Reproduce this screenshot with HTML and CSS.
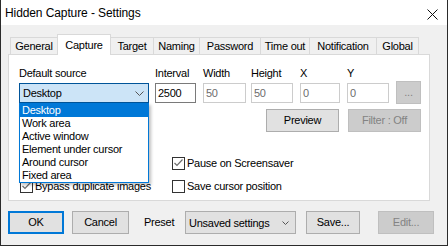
FILE: index.html
```html
<!DOCTYPE html>
<html lang="en">
<head>
  <meta charset="UTF-8" />
  <title>Hidden Capture - Settings</title>
  <link rel="stylesheet" href="styles.css">
</head>
<body>
  <div class="window">
    <div class="titlebar">
      <span class="title">Hidden Capture - Settings</span>
      <svg class="close" width="11" height="11" viewBox="0 0 11 11">
        <path d="M0.5 0.5 L10.5 10.5 M10.5 0.5 L0.5 10.5" stroke="#111" stroke-width="1" fill="none" />
      </svg>
    </div>

    <div class="client">
      <div class="tabs">
        <div class="tab t-general">General</div>
        <div class="tab t-capture active">Capture</div>
        <div class="tab t-target">Target</div>
        <div class="tab t-naming">Naming</div>
        <div class="tab t-password">Password</div>
        <div class="tab t-timeout">Time out</div>
        <div class="tab t-notif">Notification</div>
        <div class="tab t-global">Global</div>
      </div>

      <div class="panel">
        <div class="fields">
          <div class="field f-source">
            <label>Default source</label>
            <div class="combo">
              <span>Desktop</span>
              <svg class="chev" width="9" height="5" viewBox="0 0 9 5">
                <polyline points="0.5,0.5 4.5,4.5 8.5,0.5" stroke="#555" stroke-width="1" fill="none" />
              </svg>
              <ul class="droplist">
                <li class="selected">Desktop</li>
                <li>Work area</li>
                <li>Active window</li>
                <li>Element under cursor</li>
                <li>Around cursor</li>
                <li>Fixed area</li>
              </ul>
            </div>
          </div>
          <div class="field f-interval">
            <label>Interval</label>
            <div class="input">2500</div>
          </div>
          <div class="field f-width">
            <label>Width</label>
            <div class="input disabled">50</div>
          </div>
          <div class="field f-height">
            <label>Height</label>
            <div class="input disabled">50</div>
          </div>
          <div class="field f-x">
            <label>X</label>
            <div class="input disabled">0</div>
          </div>
          <div class="field f-y">
            <label>Y</label>
            <div class="input disabled">0</div>
          </div>
          <button class="btn btn-dots" disabled>...</button>
        </div>

        <div class="actions">
          <button class="btn btn-wide">Preview</button>
          <button class="btn btn-wide" disabled>Filter : Off</button>
        </div>

        <div class="checks">
          <div></div>
          <div class="check">
            <span class="cb"><svg width="11" height="11" viewBox="0 0 11 11"><polyline points="1.5,5 4,7.5 9.5,1.5" stroke="#6d6d6d" stroke-width="1.2" fill="none" /></svg></span>
            <span>Pause on Screensaver</span>
          </div>
          <div class="check">
            <span class="cb"><svg width="11" height="11" viewBox="0 0 11 11"><polyline points="1.5,5 4,7.5 9.5,1.5" stroke="#6d6d6d" stroke-width="1.2" fill="none" /></svg></span>
            <span>Bypass duplicate images</span>
          </div>
          <div class="check">
            <span class="cb"></span>
            <span>Save cursor position</span>
          </div>
        </div>
      </div>

      <div class="footer">
        <button class="btn btn-ok">OK</button>
        <button class="btn btn-cancel">Cancel</button>
        <span class="preset-label">Preset</span>
        <div class="select">
          <span>Unsaved settings</span>
          <svg width="7" height="4" viewBox="0 0 7 4">
            <polyline points="0.5,0.5 3.5,3.5 6.5,0.5" stroke="#555" stroke-width="1" fill="none" />
          </svg>
        </div>
        <button class="btn btn-save">Save...</button>
        <button class="btn btn-edit" disabled>Edit...</button>
      </div>
    </div>
  </div>
</body>
</html>
```

FILE: styles.css
```css
* { box-sizing: border-box; }
body {
  margin: 0;
  font-family: "Liberation Sans", Arial, sans-serif;
  font-size: 11px;
  letter-spacing: -0.25px;
  color: #000;
  background: #fff;
}
.window {
  width: 448px; height: 246px;
  border: 1px solid #2b2b2b; border-top: none;
  background: #f0f0f0;
}

/* title bar */
.titlebar {
  height: 25px; background: #fff;
  display: flex; justify-content: space-between; align-items: flex-start;
  padding: 1px 9px 0 4px;
}
.title { font-size: 12px; line-height: 24px; letter-spacing: -0.1px; }
.close { margin-top: 8px; }

.client { padding: 9px 0 0 7px; }

/* tabs */
.tabs { display: flex; align-items: flex-end; height: 20px; margin-left: 2px; }
.tab {
  height: 17px; line-height: 13px; padding-top: 2px;
  text-align: center;
  border: 1px solid #d9d9d9; border-bottom: none;
  background: #f0f0f0;
  margin-left: -1px;
}
.tab:first-child { margin-left: 0; }
.tab.active {
  height: 21px; padding-top: 4px;
  background: #fff; margin-bottom: -1px;
  position: relative; z-index: 1;
}
.t-general { width: 48px; }
.t-capture { width: 54px; }
.t-target { width: 44px; }
.t-naming { width: 47px; }
.t-password { width: 62px; }
.t-timeout { width: 50px; }
.t-notif { width: 68px; }
.t-global { width: 43px; }

/* panel */
.panel {
  width: 422px; height: 147px;
  background: #fff; border: 1px solid #d9d9d9;
  padding: 12px 8px 0 10px;
}
.fields { display: flex; align-items: flex-end; }
.field { display: flex; flex-direction: column; gap: 3px; }
.field label { line-height: 13px; }
.f-source { width: 130px; }
.f-interval { width: 41px; margin-left: 6px; }
.f-width { width: 43px; margin-left: 7px; }
.f-height { width: 42px; margin-left: 5px; }
.f-x { width: 40px; margin-left: 7px; }
.f-y { width: 42px; margin-left: 7px; }

.combo {
  position: relative;
  height: 20px; line-height: 18px;
  padding-left: 3px;
  background: #cce4f7; border: 1px solid #005499;
}
.combo .chev { position: absolute; right: 4px; top: 7px; }
.droplist {
  position: absolute; left: -1px; top: calc(100% + 1px);
  width: 130px;
  margin: 0; padding: 0; list-style: none;
  background: #fff; border: 1px solid #0078d7;
  box-shadow: 2px 2px 3px rgba(0,0,0,0.25);
  z-index: 10;
}
.droplist li { height: 13px; line-height: 13px; padding-left: 2px; white-space: nowrap; }
.droplist li.selected { background: #0078d7; color: #fff; }

.input {
  height: 20px; line-height: 18px; padding-left: 2px;
  background: #fff; border: 1px solid #7a7a7a;
}
.input.disabled { border-color: #cccccc; color: #6d6d6d; }

.btn {
  height: 23px; padding: 0;
  font-family: inherit; font-size: 11px; letter-spacing: inherit;
  line-height: 21px; color: #000;
  background: #e1e1e1; border: 1px solid #adadad;
}
.btn:disabled { background: #cccccc; border-color: #bfbfbf; color: #838383; }
.btn-dots { width: 25px; margin-left: 7px; margin-bottom: -1px; }

.actions { display: flex; justify-content: flex-end; gap: 9px; margin-top: 6px; }
.btn-wide { width: 73px; }

/* checkboxes */
.checks {
  display: grid; grid-template-columns: 152px 1fr;
  grid-auto-rows: 13px; row-gap: 10px;
  margin: 25px 0 0 1px;
}
.check { display: flex; align-items: flex-start; line-height: 13px; white-space: nowrap; }
.cb {
  width: 13px; height: 13px; flex: none;
  border: 1px solid #333; background: #fff;
  margin-right: 2px;
}
.cb svg { display: block; }

/* footer */
.footer { display: flex; align-items: center; margin-top: 10px; }
.btn-ok { width: 56px; border: 2px solid #0078d7; line-height: 19px; }
.btn-cancel { width: 57px; margin-left: 8px; }
.preset-label { width: 41px; margin-left: 15px; line-height: 23px; }
.select {
  width: 111px; height: 23px;
  display: flex; justify-content: space-between; align-items: center;
  padding: 0 6px 0 3px;
  background: #e1e1e1; border: 1px solid #adadad;
}
.btn-save { width: 54px; margin-left: 10px; }
.btn-edit { width: 56px; margin-left: 18px; }
```
